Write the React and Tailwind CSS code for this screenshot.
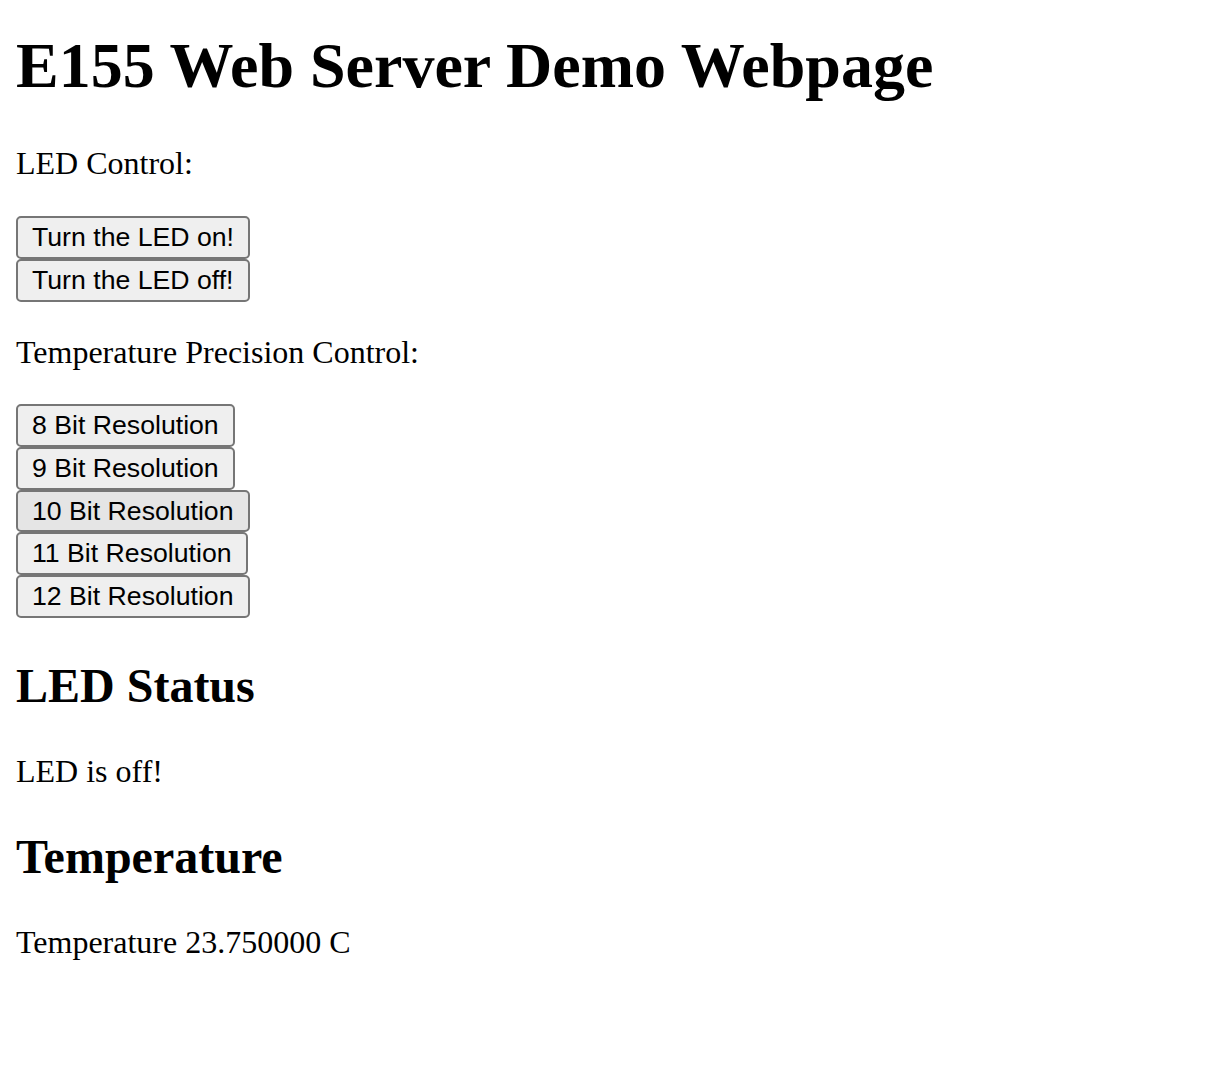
import React from 'react';

const ledButtons = ['Turn the LED on!', 'Turn the LED off!'];
const resButtons = ['8 Bit Resolution', '9 Bit Resolution', '10 Bit Resolution', '11 Bit Resolution', '12 Bit Resolution'];

const Btn = ({ label, hover }) => (
  <button
    type="button"
    className={`block border-2 border-[#767676] rounded-[5px] px-[14px] py-[2px] text-[26.67px] leading-[34.67px] text-black font-['Liberation_Sans',Arial,sans-serif] ${hover ? 'bg-[#e5e5e5]' : 'bg-[#efefef]'}`}
  >
    {label}
  </button>
);

const App = () => {
  return (
    <div className="min-h-[1090px] bg-white px-4 pt-[29px] text-black font-['Liberation_Serif','Times_New_Roman',serif]">
      <h1 className="text-[64px] leading-[73.6px] font-bold mb-[42.88px]">E155 Web Server Demo Webpage</h1>

      <p className="text-[32px] leading-[36.8px] mb-8">LED Control:</p>
      <div className="pt-[2px]">
        {ledButtons.map(b => <Btn key={b} label={b}/>)}
      </div>

      <p className="text-[32px] leading-[36.8px] my-8">Temperature Precision Control:</p>
      <div className="pt-[2px]">
        {resButtons.map((b, i) => <Btn key={b} label={b} hover={i === 2}/>)}
      </div>

      <h2 className="text-[48px] leading-[55.2px] font-bold my-[39.84px]">LED Status</h2>
      <p className="text-[32px] leading-[36.8px] my-8">LED is off!</p>

      <h2 className="text-[48px] leading-[55.2px] font-bold my-[39.84px]">Temperature</h2>
      <p className="text-[32px] leading-[36.8px] my-8">Temperature 23.750000 C</p>
    </div>
  );
};

export default App;
